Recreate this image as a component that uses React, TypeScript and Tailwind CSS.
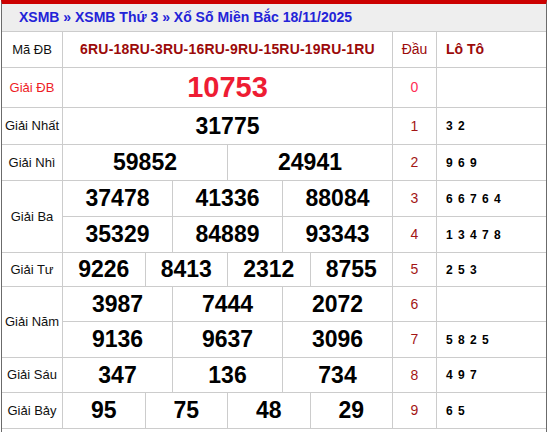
const rows = [
  { dau: "0", loto: "" },
  { dau: "1", loto: "3 2" },
  { dau: "2", loto: "9 6 9" },
  { dau: "3", loto: "6 6 7 6 4" },
  { dau: "4", loto: "1 3 4 7 8" },
  { dau: "5", loto: "2 5 3" },
  { dau: "6", loto: "" },
  { dau: "7", loto: "5 8 2 5" },
  { dau: "8", loto: "4 9 7" },
  { dau: "9", loto: "6 5" },
];

function Label({ text, span2 = false, red = false }: { text: string; span2?: boolean; red?: boolean }) {
  return (
    <div
      className={`bg-white flex items-center justify-center text-[13px] ${span2 ? "row-span-2" : ""} ${
        red ? "text-[#ee1c25]" : "text-[#111]"
      }`}
    >
      {text}
    </div>
  );
}

function Num({ value, span }: { value: string; span: 3 | 4 | 6 | 12 }) {
  const cls = { 3: "col-span-3", 4: "col-span-4", 6: "col-span-6", 12: "col-span-12" }[span];
  return (
    <div className={`${cls} bg-white flex items-center justify-center text-[23px] font-bold text-black`}>
      {value}
    </div>
  );
}

function Dau({ i }: { i: number }) {
  const r = rows[i];
  return (
    <>
      <div
        className={`bg-white flex items-center justify-center text-[14px] ${
          i === 0 ? "text-[#ff2d55]" : "text-[#a31515]"
        }`}
      >
        {r.dau}
      </div>
      <div className="bg-white flex items-center pl-[9px] text-[12px] font-bold tracking-[1px] text-black">
        {r.loto}
      </div>
    </>
  );
}

export default function App() {
  return (
    <div className="min-h-screen bg-white font-['Liberation_Sans',Arial,sans-serif]">
      <div className="ml-px w-[546px] min-h-[432px] border-x border-[#6b6b6b] border-t-4 border-t-[#cc0000]">
        <div className="h-[28px] bg-[#eeeeee] border-b border-[#cccccc] flex items-center pl-[17px] text-[14px] font-bold text-[#2323d8]">
          XSMB » XSMB Thứ 3 » Xổ Số Miền Bắc 18/11/2025
        </div>
        <div className="grid grid-cols-[60px_repeat(12,minmax(0,1fr))_43px_109px] grid-rows-[35px_39px_36px_35px_35px_35px_33px_34px_35px_34px_35px] gap-px bg-[#cccccc] border-b border-[#cccccc]">
          {/* header */}
          <Label text="Mã ĐB" />
          <div className="col-span-12 bg-white flex items-center justify-center text-[14px] font-bold tracking-[0.2px] text-[#9b0a0a]">
            6RU-18RU-3RU-16RU-9RU-15RU-19RU-1RU
          </div>
          <div className="bg-white flex items-center justify-center text-[14px] text-[#9b0a0a]">Đầu</div>
          <div className="bg-white flex items-center pl-[9px] text-[14px] font-bold text-[#9b0a0a]">Lô Tô</div>

          <Label text="Giải ĐB" red />
          <div className="col-span-12 bg-white flex items-center justify-center text-[29px] font-bold text-[#ee1c33]">
            10753
          </div>
          <Dau i={0} />

          <Label text="Giải Nhất" />
          <Num value="31775" span={12} />
          <Dau i={1} />

          <Label text="Giải Nhì" />
          <Num value="59852" span={6} />
          <Num value="24941" span={6} />
          <Dau i={2} />

          <Label text="Giải Ba" span2 />
          <Num value="37478" span={4} />
          <Num value="41336" span={4} />
          <Num value="88084" span={4} />
          <Dau i={3} />
          <Num value="35329" span={4} />
          <Num value="84889" span={4} />
          <Num value="93343" span={4} />
          <Dau i={4} />

          <Label text="Giải Tư" />
          <Num value="9226" span={3} />
          <Num value="8413" span={3} />
          <Num value="2312" span={3} />
          <Num value="8755" span={3} />
          <Dau i={5} />

          <Label text="Giải Năm" span2 />
          <Num value="3987" span={4} />
          <Num value="7444" span={4} />
          <Num value="2072" span={4} />
          <Dau i={6} />
          <Num value="9136" span={4} />
          <Num value="9637" span={4} />
          <Num value="3096" span={4} />
          <Dau i={7} />

          <Label text="Giải Sáu" />
          <Num value="347" span={4} />
          <Num value="136" span={4} />
          <Num value="734" span={4} />
          <Dau i={8} />

          <Label text="Giải Bảy" />
          <Num value="95" span={3} />
          <Num value="75" span={3} />
          <Num value="48" span={3} />
          <Num value="29" span={3} />
          <Dau i={9} />
        </div>
      </div>
    </div>
  );
}
